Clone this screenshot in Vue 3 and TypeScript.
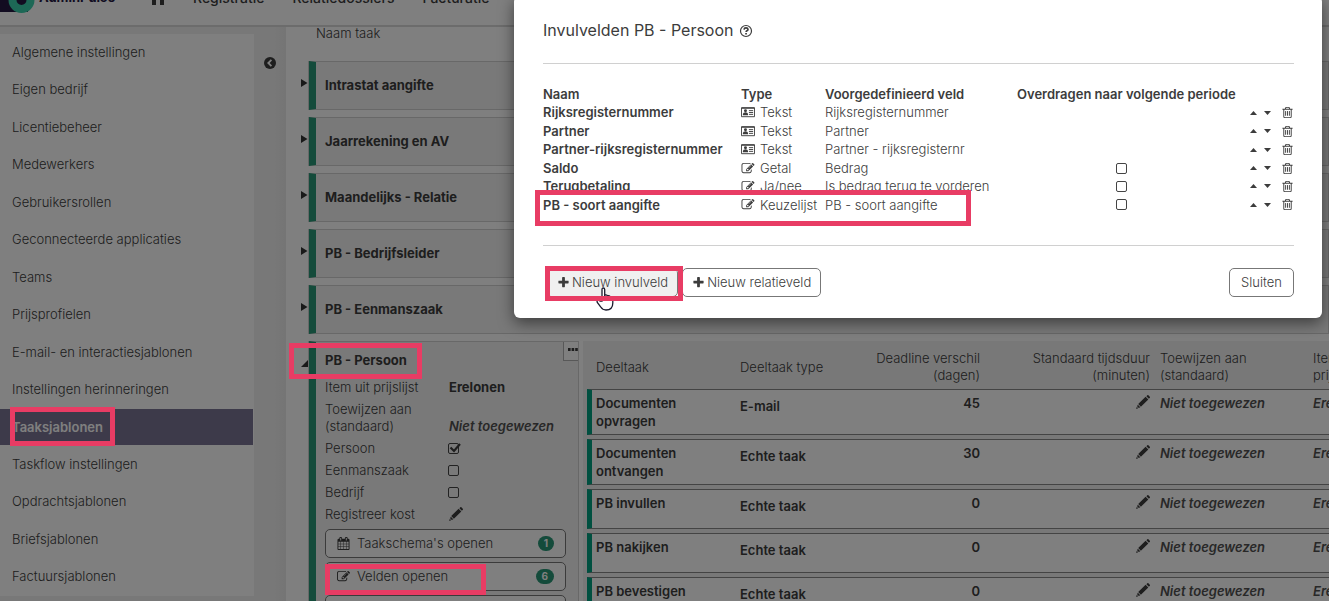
<script setup lang="ts">
import { ref } from 'vue'

type FieldKind = 'card' | 'edit'

interface Field {
  name: string
  kind: FieldKind
  type: string
  preset: string
  carry: boolean
}

interface Subtask {
  name: string
  type: string
  deadline: number
}

const topLinks: string[] = ['Registratie', 'Relatiedossiers', 'Facturatie']

const settings: string[] = [
  'Algemene instellingen',
  'Eigen bedrijf',
  'Licentiebeheer',
  'Medewerkers',
  'Gebruikersrollen',
  'Geconnecteerde applicaties',
  'Teams',
  'Prijsprofielen',
  'E-mail- en interactiesjablonen',
  'Instellingen herinneringen',
  'Taaksjablonen',
  'Taskflow instellingen',
  'Opdrachtsjablonen',
  'Briefsjablonen',
  'Factuursjablonen',
]
const activeSetting = ref('Taaksjablonen')

const closedTasks: string[] = [
  'Intrastat aangifte',
  'Jaarrekening en AV',
  'Maandelijks - Relatie',
  'PB - Bedrijfsleider',
  'PB - Eenmanszaak',
]

const audiences = ref([
  { label: 'Persoon', on: true },
  { label: 'Eenmanszaak', on: false },
  { label: 'Bedrijf', on: false },
])

const subtasks: Subtask[] = [
  { name: 'Documenten opvragen', type: 'E-mail', deadline: 45 },
  { name: 'Documenten ontvangen', type: 'Echte taak', deadline: 30 },
  { name: 'PB invullen', type: 'Echte taak', deadline: 0 },
  { name: 'PB nakijken', type: 'Echte taak', deadline: 0 },
  { name: 'PB bevestigen', type: 'Echte taak', deadline: 0 },
]

const fields: Field[] = [
  { name: 'Rijksregisternummer', kind: 'card', type: 'Tekst', preset: 'Rijksregisternummer', carry: false },
  { name: 'Partner', kind: 'card', type: 'Tekst', preset: 'Partner', carry: false },
  { name: 'Partner-rijksregisternummer', kind: 'card', type: 'Tekst', preset: 'Partner - rijksregisternr', carry: false },
  { name: 'Saldo', kind: 'edit', type: 'Getal', preset: 'Bedrag', carry: true },
  { name: 'Terugbetaling', kind: 'edit', type: 'Ja/nee', preset: 'Is bedrag terug te vorderen', carry: true },
  { name: 'PB - soort aangifte', kind: 'edit', type: 'Keuzelijst', preset: 'PB - soort aangifte', carry: true },
]

const editPath =
  'M888 1184l116-116-152-152-116 116v56h96v96h56zm440-720q-16-16-33 1l-350 350q-17 17-1 33t33-1l350-350q17-17 1-33zm80 594v190q0 119-84.5 203.5t-203.5 84.5h-832q-119 0-203.5-84.5t-84.5-203.5v-832q0-119 84.5-203.5t203.5-84.5h832q63 0 117 25 15 7 18 23 3 17-9 29l-49 49q-14 14-32 8-23-6-45-6h-832q-66 0-113 47t-47 113v832q0 66 47 113t113 47h832q66 0 113-47t47-113v-126q0-13 9-22l64-64q15-15 35-7t20 29zm-96-738l288 288-672 672h-288v-288zm444 132l-92 92-288-288 92-92q28-28 68-28t68 28l152 152q28 28 28 68t-28 68z'
const trashPath =
  'M704 736v576q0 14-9 23t-23 9h-64q-14 0-23-9t-9-23v-576q0-14 9-23t23-9h64q14 0 23 9t9 23zm256 0v576q0 14-9 23t-23 9h-64q-14 0-23-9t-9-23v-576q0-14 9-23t23-9h64q14 0 23 9t9 23zm256 0v576q0 14-9 23t-23 9h-64q-14 0-23-9t-9-23v-576q0-14 9-23t23-9h64q14 0 23 9t9 23zm128 724v-948h-896v948q0 22 7 40.5t14.5 27 10.5 8.5h832q3 0 10.5-8.5t14.5-27 7-40.5zm-672-1076h448l-48-117q-7-9-17-11h-317q-10 2-17 11zm928 32v64q0 14-9 23t-23 9h-96v948q0 83-47 143.5t-113 60.5h-832q-66 0-113-58.5t-47-141.5v-952h-96q-14 0-23-9t-9-23v-64q0-14 9-23t23-9h309l70-167q15-37 54-63t79-26h320q40 0 79 26t54 63l70 167h309q14 0 23 9t9 23z'
const calendarPath =
  'M192 1664h288v-288h-288v288zm352 0h320v-288h-320v288zm-352-352h288v-320h-288v320zm352 0h320v-320h-320v320zm-352-384h288v-288h-288v288zm736 736h320v-288h-320v288zm-384-736h320v-288h-320v288zm768 736h288v-288h-288v288zm-384-352h320v-320h-320v320zm-352-864v-288q0-13-9.5-22.5t-22.5-9.5h-64q-13 0-22.5 9.5t-9.5 22.5v288q0 13 9.5 22.5t22.5 9.5h64q13 0 22.5-9.5t9.5-22.5zm736 864h288v-320h-288v320zm-384-384h320v-288h-320v288zm384 0h288v-288h-288v288zm32-480v-288q0-13-9.5-22.5t-22.5-9.5h-64q-13 0-22.5 9.5t-9.5 22.5v288q0 13 9.5 22.5t22.5 9.5h64q13 0 22.5-9.5t9.5-22.5zm384-64v1280q0 52-38 90t-90 38h-1408q-52 0-90-38t-38-90v-1280q0-52 38-90t90-38h128v-96q0-66 47-113t113-47h64q66 0 113 47t47 113v96h384v-96q0-66 47-113t113-47h64q66 0 113 47t47 113v96h128q52 0 90 38t38 90z'
const plusPath =
  'M1600 736v192q0 40-28 68t-68 28h-416v416q0 40-28 68t-68 28h-192q-40 0-68-28t-28-68v-416h-416q-40 0-68-28t-28-68v-192q0-40 28-68t68-28h416v-416q0-40 28-68t68-28h192q40 0 68 28t28 68v416h416q40 0 68 28t28 68z'
const pencilPath =
  'M10.400 1.200l.9-.9q.6-.5 1.100 0l1.400 1.400q.5.500 0 1.100l-.9.900zM9.600 1.700l2.700 2.700-7.400 7.400-2.700-2.700zM1.800 9.700l2.500 2.500-1.500.7-1.700-1.700zM.8 11.800l1.400 1.400-2.100.7z'
</script>

<template>
  <div class="app">
    <header class="top">
      <a class="brand" href="#">
        <svg class="logo" viewBox="0 0 36 36" aria-hidden="true">
          <path d="M0 0H28V35H0Z" fill="#251943" />
          <circle cx="21.5" cy="23" r="9" fill="#251943" stroke="#3ad0ac" stroke-width="8" />
        </svg>
        <span>AdminPulse</span>
      </a>
      <nav class="top-nav" aria-label="Hoofdmenu">
        <a class="home" href="#" aria-label="Home">
          <svg viewBox="0 0 14 14"><path d="M0 7L7 1l7 6h-1v7H9V9H5v5H1V7z" fill="currentColor" /></svg>
        </a>
        <a v-for="link in topLinks" :key="link" href="#">{{ link }}</a>
      </nav>
    </header>

    <div class="body">
      <aside class="side">
        <nav class="settings" aria-label="Instellingen">
          <a
            v-for="item in settings"
            :key="item"
            href="#"
            :class="{ active: item === activeSetting }"
            @click.prevent="activeSetting = item"
          >{{ item }}</a>
        </nav>
      </aside>
      <div class="gutter">
        <button type="button" aria-label="Menu inklappen">
          <svg viewBox="0 0 12 12"><circle cx="6" cy="6" r="6" fill="currentColor" /><path d="M7.4 2.9L4.3 6l3.1 3.1" fill="none" stroke="#fff" stroke-width="1.8" /></svg>
        </button>
      </div>

      <main class="main">
        <div class="list-head">Naam taak</div>
        <div v-for="task in closedTasks" :key="task" class="task">
          <button class="toggle" type="button" :aria-label="task + ' openen'">
            <svg viewBox="0 0 7 8"><path d="M0 0l6.500 4L0 8z" fill="currentColor" /></svg>
          </button>
          <div class="task-bar">{{ task }}</div>
        </div>

        <div class="open">
          <button class="toggle" type="button" aria-label="PB - Persoon sluiten">
            <svg viewBox="0 0 7 8"><path d="M7 1v7H0z" fill="currentColor" /></svg>
          </button>
          <section class="detail">
            <button class="more" type="button" aria-label="Meer">
              <svg viewBox="0 0 10 4"><path d="M0 0h2.600v3H0zM3.600 0h2.600v3H3.600zM7.200 0h2.600v3H7.200z" fill="currentColor" /></svg>
            </button>
            <h2>PB - Persoon</h2>
            <div class="prop"><span>Item uit prijslijst</span><strong>Erelonen</strong></div>
            <div class="prop"><span>Toewijzen aan (standaard)</span><em>Niet toegewezen</em></div>
            <label v-for="a in audiences" :key="a.label" class="prop">
              <span>{{ a.label }}</span>
              <span class="tick">
                <input v-model="a.on" type="checkbox" />
                <svg v-if="a.on" viewBox="0 0 12 10"><path d="M1.500 4.500L5 8l6-7" fill="none" stroke="currentColor" stroke-width="2.200" /></svg>
              </span>
            </label>
            <div class="prop">
              <span>Registreer kost</span>
              <svg class="pencil" viewBox="0 0 14 14"><path :d="pencilPath" fill="currentColor" /></svg>
            </div>
            <div class="actions">
              <button type="button">
                <svg viewBox="0 0 1792 1792"><path :d="calendarPath" fill="currentColor" /></svg>
                <span>Taakschema's openen</span><b>1</b>
              </button>
              <button type="button">
                <svg viewBox="0 0 1792 1792"><path :d="editPath" fill="currentColor" /></svg>
                <span>Velden openen</span><b>6</b>
              </button>
              <button type="button" aria-label="Meer acties"></button>
            </div>
          </section>

          <section class="subs">
            <table>
              <colgroup>
                <col class="c-name" /><col class="c-type" /><col class="c-deadline" />
                <col class="c-time" /><col class="c-assign" /><col class="c-item" />
              </colgroup>
              <thead>
                <tr>
                  <th>Deeltaak</th>
                  <th>Deeltaak type</th>
                  <th class="num">Deadline verschil (dagen)</th>
                  <th class="num">Standaard tijdsduur (minuten)</th>
                  <th>Toewijzen aan (standaard)</th>
                  <th>Item uit prijslijst</th>
                </tr>
              </thead>
              <tbody>
                <tr v-for="s in subtasks" :key="s.name">
                  <td class="name">{{ s.name }}</td>
                  <td class="kind">{{ s.type }}</td>
                  <td class="num">{{ s.deadline }}</td>
                  <td class="num"><svg class="pencil" viewBox="0 0 14 14"><path :d="pencilPath" fill="currentColor" /></svg></td>
                  <td><em>Niet toegewezen</em></td>
                  <td><em>Erelonen</em></td>
                </tr>
              </tbody>
            </table>
          </section>
        </div>
      </main>
    </div>

    <div class="backdrop">
      <div class="modal" role="dialog" aria-labelledby="modal-title">
        <h1 id="modal-title">
          Invulvelden PB - Persoon
          <svg viewBox="0 0 14 14"><circle cx="7" cy="7" r="5.500" fill="none" stroke="currentColor" stroke-width="1.200" /><path d="M5 5.600q.1-1.700 2-1.700t2 1.500q0 .8-1 1.300-.9.500-.9 1.300" fill="none" stroke="currentColor" stroke-width="1.600" /><path d="M6.200 9h1.700v1.500H6.200z" fill="currentColor" /></svg>
        </h1>
        <div class="modal-body">
          <table class="fields">
            <colgroup>
              <col class="f-name" /><col class="f-type" /><col class="f-preset" /><col class="f-carry" /><col />
            </colgroup>
            <thead>
              <tr>
                <th>Naam</th><th>Type</th><th>Voorgedefinieerd veld</th><th>Overdragen naar volgende periode</th><td></td>
              </tr>
            </thead>
            <tbody>
              <tr v-for="f in fields" :key="f.name">
                <th>{{ f.name }}</th>
                <td>
                  <span class="type">
                    <svg v-if="f.kind === 'card'" class="card" viewBox="0 0 15 12">
                      <path d="M.5 1h14v9.500H.5z" fill="none" stroke="currentColor" />
                      <path d="M.5 1.200h14" stroke="currentColor" stroke-width="1.400" />
                      <circle cx="4.800" cy="4.200" r="1.600" fill="currentColor" />
                      <path d="M2 9V7.500Q2.300 5.700 4.800 5.700T7.500 7.500V9z" fill="currentColor" />
                      <path d="M8.500 4H13M8.500 6H13M8.500 8H13" stroke="currentColor" />
                    </svg>
                    <svg v-else viewBox="0 0 1792 1792"><path :d="editPath" fill="currentColor" /></svg>
                    {{ f.type }}
                  </span>
                </td>
                <td>{{ f.preset }}</td>
                <td class="carry"><input v-if="f.carry" type="checkbox" :aria-label="f.name + ' overdragen'" /></td>
                <td>
                  <div class="tools">
                    <button type="button" aria-label="Omhoog"><svg class="caret" viewBox="0 0 7 4"><path d="M0 4l3.500-4L7 4z" fill="currentColor" /></svg></button>
                    <button type="button" aria-label="Omlaag"><svg class="caret" viewBox="0 0 7 4"><path d="M0 0h7L3.500 4z" fill="currentColor" /></svg></button>
                    <button class="bin" type="button" aria-label="Verwijderen"><svg viewBox="0 0 1792 1792"><path :d="trashPath" fill="currentColor" /></svg></button>
                  </div>
                </td>
              </tr>
            </tbody>
          </table>
        </div>
        <footer>
          <button class="hovered" type="button"><svg viewBox="0 0 1792 1792"><path :d="plusPath" fill="currentColor" /></svg>Nieuw invulveld</button>
          <button type="button"><svg viewBox="0 0 1792 1792"><path :d="plusPath" fill="currentColor" /></svg>Nieuw relatieveld</button>
          <button class="close" type="button">Sluiten</button>
        </footer>
      </div>
    </div>

    <svg class="cursor" viewBox="0 0 18 24" aria-hidden="true">
      <path d="M6 14V2.500Q6 1 7.300 1T8.700 2.500V8q2.400-.6 2.900.9 2.200-.5 2.600 1 2.600-.3 2.600 1.900V16q0 7-6.800 7-3.400 0-5.200-3L1.300 15.500Q.5 14 2 13.300q1-.4 2 .7z" fill="#fff" stroke="#1a1a2c" stroke-width="1.300" />
      <path d="M8.700 8v4.500M11.600 9v3.500M14.300 10v3" fill="none" stroke="#1a1a2c" stroke-width="1.200" />
    </svg>
    <div class="mark mark-setting"></div>
    <div class="mark mark-task"></div>
    <div class="mark mark-open"></div>
    <div class="mark mark-field"></div>
    <div class="mark mark-new"></div>
  </div>
</template>

<style>
body {
  margin: 0;
}
</style>

<style scoped>
* {
  box-sizing: border-box;
}
.app {
  position: relative;
  height: 100vh;
  overflow: hidden;
  display: flex;
  flex-direction: column;
  background: #f0f0f0;
  color: #3c3c3c;
  font: 300 13px/1.42 Inter, "Liberation Sans", sans-serif;
}
a {
  color: inherit;
  text-decoration: none;
}
button {
  display: block;
  font: inherit;
  color: inherit;
  background: none;
  border: 0;
  padding: 0;
}
svg {
  display: block;
  flex: none;
}
h1,
h2 {
  margin: 0;
}
em {
  font-weight: 600;
  color: #505050;
}
strong {
  font-weight: 700;
}
input[type='checkbox'] {
  appearance: none;
  display: block;
  width: 11px;
  height: 11px;
  margin: 0;
  border: 1px solid #444;
  border-radius: 2px;
}

/* Top bar, scrolled mostly out of view */
.top {
  flex: none;
  display: flex;
  align-items: center;
  height: 57px;
  margin-top: -30px;
  background: #fff;
  border-bottom: 2px solid #d8d8d8;
  font-size: 14px;
  font-weight: 500;
}
.brand {
  display: flex;
  align-items: center;
  gap: 3px;
  width: 151px;
  font-size: 13px;
  font-weight: 700;
  color: #251943;
}
.logo {
  width: 36px;
  height: 36px;
  margin-top: -6px;
}
.top-nav {
  display: flex;
  align-items: center;
  gap: 28px;
}
.home svg {
  width: 14px;
  height: 14px;
}

.body {
  flex: 1;
  display: flex;
  min-height: 0;
}
.side {
  flex: none;
  width: 254px;
  padding-top: 7px;
}
.settings {
  display: flex;
  flex-direction: column;
  background: #fff;
}
.settings a {
  padding: 9px 12px;
  border-bottom: 1px solid #fff;
  margin-right: 1px;
}
.settings a.active {
  background: #7b7494;
  color: #fff;
  font-weight: 600;
}
.gutter {
  flex: none;
  width: 32px;
  padding: 30px 10px;
  background: linear-gradient(90deg, #f0f0f0 65%, #eaeaea);
}
.gutter svg {
  width: 12px;
  height: 12px;
}

.main {
  flex: 1;
  min-width: 0;
  overflow: hidden;
  background: #fff;
  padding-left: 15px;
}
.list-head {
  padding: 0 15px;
  height: 34px;
  line-height: 13px;
}
.task {
  display: flex;
  margin-bottom: 7px;
}
.toggle {
  flex: none;
  width: 7px;
  height: 8px;
  margin-top: 18px;
  color: #333;
}
.toggle svg {
  width: 7px;
  height: 8px;
}
.task-bar {
  flex: 1;
  padding: 14px 9px 15px;
  border: 1px solid #d0d0d0;
  border-left: 7px solid #299676;
  background: #f3f3f3;
  line-height: 18px;
  font-weight: 700;
  box-shadow: -1px 0 #d0d0d0;
  margin-left: 1px;
}
.open {
  display: flex;
}
.detail {
  position: relative;
  flex: none;
  width: 270px;
  height: 300px;
  margin-left: 1px;
  padding: 10px 12px 0 9px;
  border: 1px solid #d0d0d0;
  border-left: 7px solid #299676;
  background: #f3f3f3;
  box-shadow: -1px 0 #d0d0d0;
}
.detail h2 {
  font-size: 13px;
  line-height: 17px;
  font-weight: 700;
  margin-bottom: 10px;
}
.more {
  position: absolute;
  top: 0;
  right: 0;
  width: 15px;
  height: 19px;
  padding: 0 0 2px 4px;
  border: 1px solid #b0b0b0;
  border-width: 0 0 1px 1px;
  background: #fff;
}
.more svg {
  width: 10px;
  height: 4px;
}
.prop {
  display: grid;
  grid-template-columns: 124px 1fr;
  align-items: end;
  margin-bottom: 5px;
  line-height: 17px;
}
.prop span:first-child {
  padding-right: 20px;
}
.tick {
  position: relative;
  display: block;
  padding-bottom: 3px;
}
.tick input {
  margin-left: -1px;
}
.tick svg {
  position: absolute;
  left: 0;
  top: 0;
  width: 12px;
  height: 10px;
}
.pencil {
  width: 14px;
  height: 14px;
}
.prop .pencil {
  margin-bottom: 2px;
}
.actions {
  display: flex;
  flex-direction: column;
  gap: 4px;
  padding-top: 1px;
}
.actions button {
  display: flex;
  align-items: center;
  gap: 7px;
  height: 29px;
  padding: 0 11px;
  border: 1px solid #777;
  border-radius: 5px;
  background: #fff;
  text-align: left;
}
.actions span {
  flex: 1;
}
.actions svg {
  width: 13px;
  height: 13px;
}
.actions b {
  padding: 0 6px;
  border-radius: 8px;
  background: #299676;
  color: #fff;
  font-size: 10px;
  font-weight: 700;
  line-height: 15px;
}

.subs {
  flex: 1;
  min-width: 0;
  margin-left: 4px;
  padding-left: 4px;
  background: #f0f0f0;
  overflow: hidden;
}
.subs table {
  table-layout: fixed;
  width: 841px;
  border-spacing: 0 4px;
}
.c-name { width: 148px; }
.c-type { width: 125px; }
.c-deadline { width: 125px; }
.c-time { width: 170px; }
.c-assign { width: 153px; }
.c-item { width: 120px; }
.subs th {
  height: 40px;
  padding: 4px 5px 0;
  font-weight: 300;
  line-height: 17px;
  text-align: left;
}
.subs th:first-child {
  padding-left: 9px;
}
.subs th:last-child {
  padding-right: 30px;
}
.subs td {
  height: 40px;
  padding: 4px 5px;
  vertical-align: top;
  line-height: 18px;
  font-weight: 600;
  background: #fff;
  border: 1px solid #888;
  border-width: 1px 0;
}
.subs td.name {
  border-left: 5px solid #00a080;
  padding: 4px 40px 4px 4px;
}
.subs td.kind {
  padding-top: 7px;
}
.subs th.num,
.subs td.num {
  text-align: right;
}
.subs .pencil {
  margin: 1px 0 0 auto;
}

/* Dialog */
.backdrop {
  position: absolute;
  inset: 0;
  padding: 0 7px 0 514px;
  background: rgba(0, 0, 0, 0.5);
}
.modal {
  margin-top: -4px;
  padding: 24px 28px 21px 29px;
  background: #fff;
  border-radius: 6px;
  box-shadow: 0 5px 15px rgba(0, 0, 0, 0.5);
}
.modal h1 {
  display: flex;
  align-items: center;
  gap: 5px;
  padding-bottom: 22px;
  font-size: 16px;
  line-height: 21px;
  font-weight: 400;
}
.modal h1 svg {
  width: 14px;
  height: 14px;
}
.modal-body {
  padding: 21px 0 31px;
  border: 1px solid #d0d0d0;
  border-width: 1px 0;
}
.fields {
  table-layout: fixed;
  width: 100%;
  border-collapse: collapse;
  white-space: nowrap;
}
.f-name { width: 198px; }
.f-type { width: 84px; }
.f-preset { width: 192px; }
.f-carry { width: 208px; }
.fields th,
.fields td {
  padding: 0;
  text-align: left;
}
.fields th {
  font-weight: 600;
}
.type {
  display: flex;
  align-items: center;
  gap: 5px;
}
.type svg {
  width: 14px;
  height: 13px;
}
.carry input {
  margin: 0 auto;
}
.tools {
  display: flex;
  align-items: center;
  justify-content: flex-end;
  gap: 7px;
}
.caret {
  width: 7px;
  height: 4px;
}
.bin {
  margin-left: 3px;
}
.bin svg {
  width: 13px;
  height: 13px;
}
.modal footer {
  display: flex;
  gap: 4px;
  padding: 22px 0 0 3px;
}
.modal footer button {
  display: flex;
  align-items: center;
  gap: 2px;
  height: 29px;
  padding: 0 9px;
  border: 1px solid #777;
  border-radius: 5px;
}
.modal footer svg {
  width: 13px;
  height: 13px;
}
.modal footer .hovered {
  padding: 0 9px 0 10px;
  background: #f0f0f0;
}
.modal footer .close {
  margin-left: auto;
  padding: 0 11px;
}

/* Pointer and highlight frames laid over the screen */
.cursor {
  position: absolute;
  left: 596px;
  top: 287px;
  width: 18px;
  height: 24px;
}
.mark {
  position: absolute;
  border: 5px solid #e83c64;
  pointer-events: none;
}
.mark-setting { left: 10px; top: 407px; width: 105px; height: 39px; }
.mark-task { left: 289px; top: 343px; width: 133px; height: 36px; }
.mark-open { left: 325px; top: 564px; width: 161px; height: 31px; }
.mark-field { left: 535px; top: 190px; width: 436px; height: 36px; }
.mark-new { left: 545px; top: 266px; width: 138px; height: 35px; }
</style>
